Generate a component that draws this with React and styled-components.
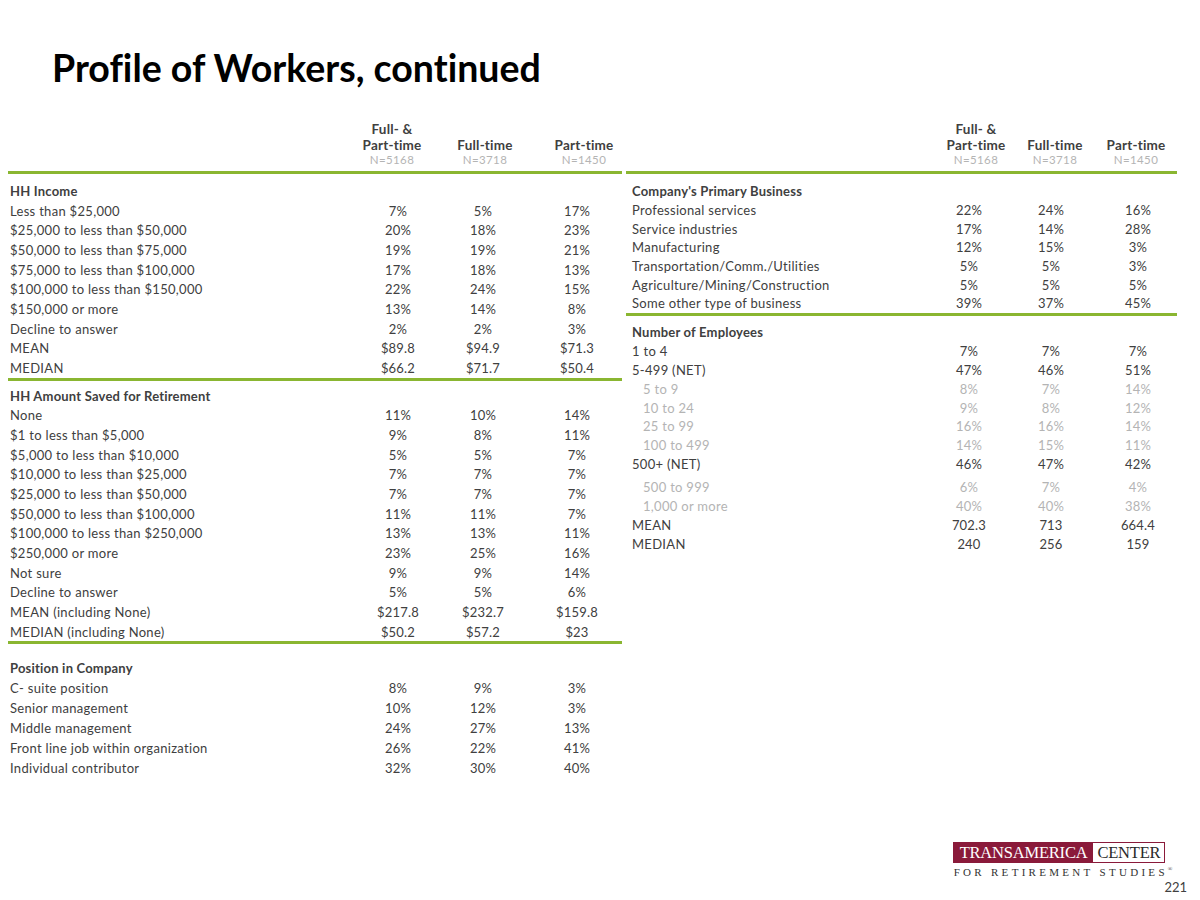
import React from "react";
import styled, { createGlobalStyle } from "styled-components";

const GREEN = "#8ab631";
const INK = "#404040";
const FAINT = "#b4b4b4";
const MAROON = "#8a1a3a";

const LEFT_HEAD = "352px 64px 122px 76px";
const LEFT_BODY = "354px 72px 98px 90px";
const RIGHT_HEAD = "311px 78px 80px 82px";
const RIGHT_BODY = "309px 68px 96px 78px";

const leftSections = [
  {
    title: "HH Income",
    top: 7,
    rowH: 19.7,
    rows: [
      ["Less than $25,000", "7%", "5%", "17%"],
      ["$25,000 to less than $50,000", "20%", "18%", "23%"],
      ["$50,000 to less than $75,000", "19%", "19%", "21%"],
      ["$75,000 to less than $100,000", "17%", "18%", "13%"],
      ["$100,000 to less than $150,000", "22%", "24%", "15%"],
      ["$150,000 or more", "13%", "14%", "8%"],
      ["Decline to answer", "2%", "2%", "3%"],
      ["MEAN", "$89.8", "$94.9", "$71.3"],
      ["MEDIAN", "$66.2", "$71.7", "$50.4"],
    ],
    rule: true,
  },
  {
    title: "HH Amount Saved for Retirement",
    top: 5,
    rowH: 19.67,
    rows: [
      ["None", "11%", "10%", "14%"],
      ["$1 to less than $5,000", "9%", "8%", "11%"],
      ["$5,000 to less than $10,000", "5%", "5%", "7%"],
      ["$10,000 to less than $25,000", "7%", "7%", "7%"],
      ["$25,000 to less than $50,000", "7%", "7%", "7%"],
      ["$50,000 to less than $100,000", "11%", "11%", "7%"],
      ["$100,000 to less than $250,000", "13%", "13%", "11%"],
      ["$250,000 or more", "23%", "25%", "16%"],
      ["Not sure", "9%", "9%", "14%"],
      ["Decline to answer", "5%", "5%", "6%"],
      ["MEAN (including None)", "$217.8", "$232.7", "$159.8"],
      ["MEDIAN (including None)", "$50.2", "$57.2", "$23"],
    ],
    rule: true,
  },
  {
    title: "Position in Company",
    top: 13,
    rowH: 20.2,
    rows: [
      ["C- suite position", "8%", "9%", "3%"],
      ["Senior management", "10%", "12%", "3%"],
      ["Middle management", "24%", "27%", "13%"],
      ["Front line job within organization", "26%", "22%", "41%"],
      ["Individual contributor", "32%", "30%", "40%"],
    ],
  },
];

const rightSections = [
  {
    title: "Company's Primary Business",
    top: 8,
    rowH: 18.67,
    rows: [
      ["Professional services", "22%", "24%", "16%"],
      ["Service industries", "17%", "14%", "28%"],
      ["Manufacturing", "12%", "15%", "3%"],
      ["Transportation/Comm./Utilities", "5%", "5%", "3%"],
      ["Agriculture/Mining/Construction", "5%", "5%", "5%"],
      ["Some other type of business", "39%", "37%", "45%"],
    ],
    rule: true,
  },
  {
    title: "Number of Employees",
    top: 7,
    rowH: 18.9,
    rows: [
      ["1 to 4", "7%", "7%", "7%"],
      ["5-499 (NET)", "47%", "46%", "51%"],
      ["5 to 9", "8%", "7%", "14%", "sub"],
      ["10 to 24", "9%", "8%", "12%", "sub"],
      ["25 to 99", "16%", "16%", "14%", "sub"],
      ["100 to 499", "14%", "15%", "11%", "sub"],
      ["500+ (NET)", "46%", "47%", "42%"],
      ["500 to 999", "6%", "7%", "4%", "sub", 4],
      ["1,000 or more", "40%", "40%", "38%", "sub"],
      ["MEAN", "702.3", "713", "664.4"],
      ["MEDIAN", "240", "256", "159"],
    ],
  },
];

const GlobalStyle = createGlobalStyle`
  html, body {
    margin: 0;
    padding: 0;
    background: #ffffff;
  }
  body {
    font-family: Lato, "Open Sans", Arial, sans-serif;
    font-variant-ligatures: none;
    color: ${INK};
  }
`;

const Page = styled.div`
  width: 1200px;
  height: 900px;
  box-sizing: border-box;
  display: flex;
  flex-direction: column;
  overflow: hidden;
`;

const Title = styled.h1`
  margin: 45px 0 0 52px;
  font-family: Lato, "Open Sans", sans-serif;
  font-weight: 700;
  font-size: 37.5px;
  line-height: 45px;
  color: #000000;
  font-variant-ligatures: none;
`;

const Tables = styled.div`
  display: flex;
  gap: 4px;
  margin: 31px 0 0 8px;
  align-items: flex-start;
`;

const Table = styled.div`
  width: ${(p) => p.$width}px;
  display: flex;
  flex-direction: column;
`;

const HeadRow = styled.div`
  display: grid;
  grid-template-columns: ${(p) => p.$cols};
  align-items: end;
  padding-bottom: 5px;
`;

const HeadCell = styled.div`
  text-align: center;
  font-weight: 700;
  font-size: 13.5px;
  line-height: 16px;
  letter-spacing: 0.2px;
  color: ${INK};
`;

const Count = styled.div`
  font-weight: 400;
  font-size: 11.5px;
  line-height: 13px;
  letter-spacing: 0.4px;
  color: ${FAINT};
`;

const Rule = styled.div`
  height: 3px;
  background: ${GREEN};
`;

const Section = styled.div`
  padding-top: ${(p) => p.$top}px;
`;

const Row = styled.div`
  display: grid;
  grid-template-columns: ${(p) => p.$cols};
  align-items: center;
  height: ${(p) => p.$h}px;
  margin-top: ${(p) => p.$gap || 0}px;
  font-size: 13px;
  color: ${(p) => (p.$sub ? FAINT : INK)};
`;

const Label = styled.div`
  padding-left: ${(p) => p.$indent + (p.$sub ? 11 : 0)}px;
  font-weight: ${(p) => (p.$bold ? 700 : 400)};
  letter-spacing: ${(p) => (p.$bold ? 0.2 : 0.3)}px;
  white-space: nowrap;
`;

const Value = styled.div`
  text-align: center;
  white-space: nowrap;
  letter-spacing: 0.2px;
`;

const Footer = styled.div`
  margin-top: auto;
  display: flex;
  justify-content: flex-end;
  align-items: flex-start;
  padding: 0 13px 5px 0;
`;

const Logo = styled.div`
  display: flex;
  flex-direction: column;
  align-items: flex-start;
  margin-right: -8px;
`;

const Bar = styled.div`
  display: flex;
  height: 21px;
  border: 1px solid ${MAROON};
  box-sizing: border-box;
  font-family: "Liberation Serif", "DejaVu Serif", serif;
  font-size: 16.5px;
  line-height: 19px;
`;

const BarPart = styled.div`
  padding: 0 ${(p) => p.$pad}px;
  background: ${(p) => (p.$filled ? MAROON : "#ffffff")};
  color: ${(p) => (p.$filled ? "#ffffff" : "#2a2a2a")};
  letter-spacing: -0.2px;
`;

const Tagline = styled.div`
  margin-top: 3px;
  padding-left: 1px;
  font-family: "Liberation Serif", "DejaVu Serif", serif;
  font-size: 11px;
  letter-spacing: 3.3px;
  color: #333333;
  white-space: nowrap;
  sup {
    font-size: 6px;
    letter-spacing: 0;
    vertical-align: 5px;
  }
`;

const PageNo = styled.div`
  margin-top: 37px;
  font-size: 13px;
  color: ${INK};
`;

function Header({ cols }) {
  return (
    <HeadRow $cols={cols}>
      <div />
      <HeadCell>
        Full- &amp;
        <br />
        Part-time
        <Count>N=5168</Count>
      </HeadCell>
      <HeadCell>
        Full-time
        <Count>N=3718</Count>
      </HeadCell>
      <HeadCell>
        Part-time
        <Count>N=1450</Count>
      </HeadCell>
    </HeadRow>
  );
}

function DataTable({ width, head, body, indent, sections }) {
  return (
    <Table $width={width}>
      <Header cols={head} />
      <Rule />
      {sections.map((s) => (
        <React.Fragment key={s.title}>
          <Section $top={s.top}>
            <Row $cols={body} $h={s.rowH}>
              <Label $bold $indent={indent}>
                {s.title}
              </Label>
            </Row>
            {s.rows.map(([label, a, b, c, kind, gap]) => (
              <Row
                key={label}
                $cols={body}
                $h={s.rowH}
                $sub={kind === "sub"}
                $gap={gap}
              >
                <Label $sub={kind === "sub"} $indent={indent}>
                  {label}
                </Label>
                <Value>{a}</Value>
                <Value>{b}</Value>
                <Value>{c}</Value>
              </Row>
            ))}
          </Section>
          {s.rule && <Rule />}
        </React.Fragment>
      ))}
    </Table>
  );
}

export default function App() {
  return (
    <Page>
      <GlobalStyle />
      <Title>Profile of Workers, continued</Title>
      <Tables>
        <DataTable
          width={614}
          head={LEFT_HEAD}
          body={LEFT_BODY}
          indent={2}
          sections={leftSections}
        />
        <DataTable
          width={551}
          head={RIGHT_HEAD}
          body={RIGHT_BODY}
          indent={6}
          sections={rightSections}
        />
      </Tables>
      <Footer>
        <Logo>
          <Bar>
            <BarPart $filled $pad={6}>TRANSAMERICA</BarPart>
            <BarPart $pad={4}>CENTER</BarPart>
          </Bar>
          <Tagline>
            FOR RETIREMENT STUDIES<sup>®</sup>
          </Tagline>
        </Logo>
        <PageNo>221</PageNo>
      </Footer>
    </Page>
  );
}
